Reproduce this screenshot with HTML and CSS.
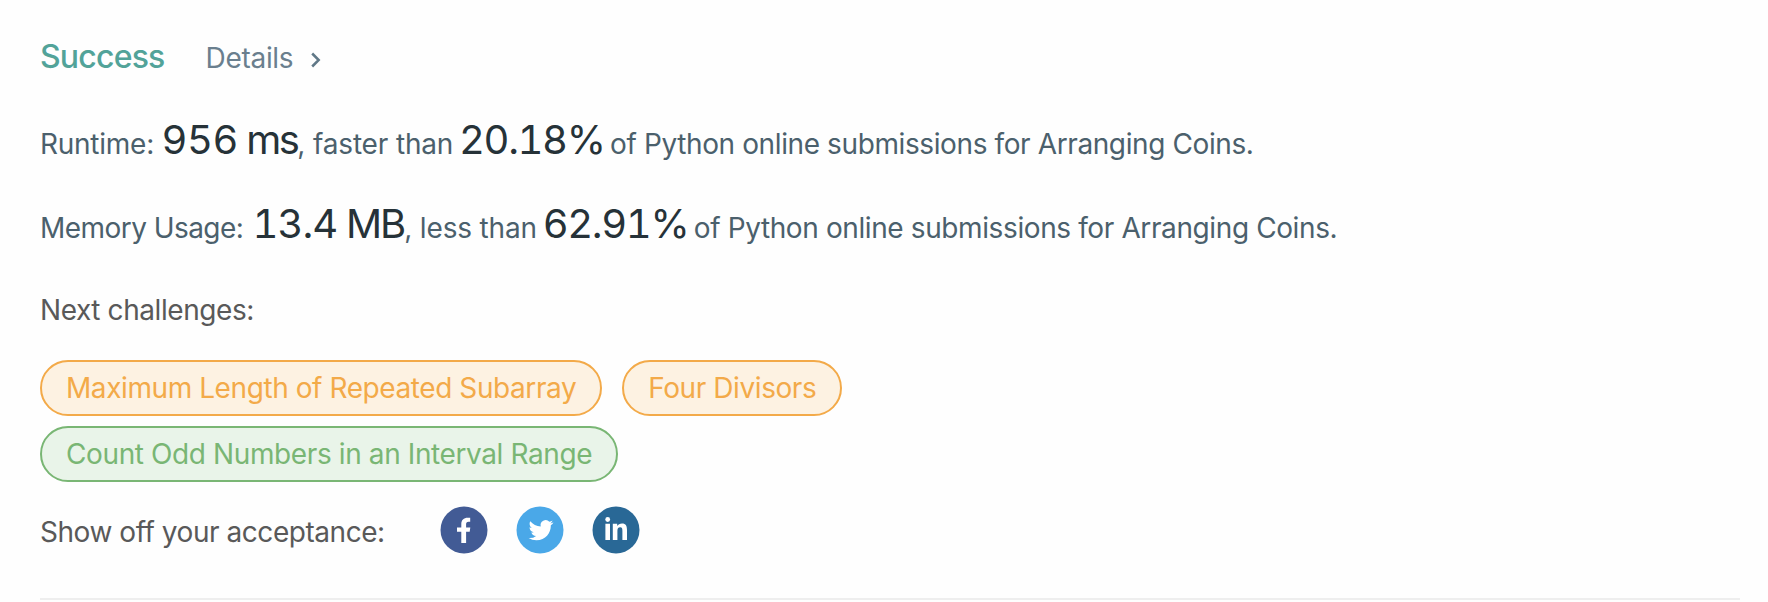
FILE: index.html
```html
<!DOCTYPE html>
<html lang="en">
<head>
<meta charset="utf-8">
<title>Submission result</title>
<link rel="stylesheet" href="styles.css">
</head>
<body>
<main class="result">
  <header class="head"><span class="status">Success</span><a class="details"><span>Details</span><svg class="chevron" width="12" height="18" viewBox="0 0 12 18"><path d="M2.2 2.5 8.7 9l-6.5 6.5"/></svg></a></header>
  <p class="stat"><span class="label-runtime">Runtime: </span><span class="value">956<span class="unit-ms"> ms</span></span><span class="mid">, faster than </span><span class="value percent">20.18%</span><span class="tail"> of Python online submissions for Arranging Coins.</span></p>
  <p class="stat stat-memory"><span class="label-memory">Memory Usage: </span><span class="value memory">13.4<span class="unit-mb"> MB</span></span><span class="mid">, less than </span><span class="value percent">62.91%</span><span class="tail"> of Python online submissions for Arranging Coins.</span></p>
  <h2 class="next">Next challenges:</h2>
  <div class="challenges">
    <a class="pill medium">Maximum Length of Repeated Subarray</a>
    <a class="pill medium">Four Divisors</a>
    <a class="pill easy">Count Odd Numbers in an Interval Range</a>
  </div>
  <div class="share">
    <span class="share-label">Show off your acceptance:</span>
    <div class="socials">
      <svg width="48" height="48" viewBox="0 0 48 48"><circle cx="24" cy="24" r="23.5" fill="#425b95"/><path fill="#fff" d="M21.3 37V25.7H17V21.5h4.3v-3.2c0-4.3 2.4-6.6 6.5-6.6h2.4v4.1h-1.7c-1.8 0-2.4.9-2.4 2.5v3.2h4.2l-.6 4.2h-3.6V37z"/></svg>
      <svg width="48" height="48" viewBox="0 0 48 48"><circle cx="24" cy="24" r="23.5" fill="#4aa8e8"/><path fill="#fff" transform="translate(12.6 11.9) scale(1.03)" d="M23.953 4.57a10 10 0 01-2.825.775 4.958 4.958 0 002.163-2.723c-.951.555-2.005.959-3.127 1.184a4.92 4.92 0 00-8.384 4.482C7.69 8.095 4.067 6.13 1.64 3.162a4.822 4.822 0 00-.666 2.475c0 1.71.87 3.213 2.188 4.096a4.904 4.904 0 01-2.228-.616v.06a4.923 4.923 0 003.946 4.827 4.996 4.996 0 01-2.212.085 4.936 4.936 0 004.604 3.417 9.867 9.867 0 01-6.102 2.105c-.39 0-.779-.023-1.17-.067a13.995 13.995 0 007.557 2.209c9.053 0 13.998-7.496 13.998-13.985 0-.21 0-.42-.015-.63A9.935 9.935 0 0024 4.59z"/></svg>
      <svg width="48" height="48" viewBox="0 0 48 48"><circle cx="24" cy="24" r="23.5" fill="#296896"/><g fill="#fff"><circle cx="15.7" cy="13.5" r="2.4"/><path d="M13.4 17.8h4.6V34h-4.6zM20.8 17.8h4.4V20c1-1.6 2.6-2.6 4.8-2.6 4 0 5 2.7 5 6.6v10h-4.6v-9c0-2.2-.2-3.7-2.2-3.7-2.2 0-2.8 1.6-2.8 3.7v9h-4.6z"/></g></svg>
    </div>
  </div>
  <hr class="rule">
</main>
</body>
</html>
```
FILE: styles.css
```css
* { box-sizing: border-box; }
body { margin: 0; background: #fefefe; font-family: Inter, "Open Sans", sans-serif; font-size: 28px; letter-spacing: -0.42px; color: #595959; }
.result { padding: 34px 28px 0 40px; }
.head { display: flex; align-items: baseline; gap: 41px; height: 46px; line-height: 46px; }
.status { color: #52a399; font-size: 32px; font-weight: 500; letter-spacing: -0.8px; }
.details { display: flex; align-items: center; gap: 17px; color: #6a7f8e; letter-spacing: -0.3px; }
.chevron { fill: none; stroke: #607887; stroke-width: 2.5; margin-top: 3px; }
.stat { margin: 30px 0 0; height: 60px; line-height: 60px; white-space: pre; color: #4b606c; }
.stat-memory { margin-top: 24px; }
.value { font-size: 40px; color: #263238; font-variant-numeric: tabular-nums; letter-spacing: -0.5px; }
.percent { letter-spacing: -1.35px; margin-left: -2px; margin-right: -2px; }
.memory { letter-spacing: -1px; margin-left: 2px; }
.unit-ms { letter-spacing: -2.5px; }
.unit-mb { letter-spacing: -2px; }
.label-runtime { letter-spacing: -0.25px; }
.label-memory { letter-spacing: -0.55px; }
.mid { letter-spacing: -0.16px; }
.tail { letter-spacing: -0.39px; }
.next { margin: 34px 0 0; height: 44px; line-height: 44px; font-size: 28px; font-weight: 400; }
.challenges { display: flex; flex-wrap: wrap; width: 900px; margin-top: 28px; gap: 10px 20px; }
.pill { height: 56px; line-height: 53px; padding: 0 24px; border: 2px solid; border-radius: 28px; white-space: nowrap; }
.medium { color: #f3aa49; background: #fdf2e2; }
.easy { color: #79b674; background: #e9f4e9; letter-spacing: -0.39px; }
.share { display: flex; align-items: center; height: 48px; margin-top: 24px; }
.share-label { width: 400px; padding-top: 4px; white-space: nowrap; letter-spacing: -0.45px; }
.socials { display: flex; gap: 28px; }
.rule { height: 2px; margin: 44px 0 0; border: 0; background: #eee; }
```
